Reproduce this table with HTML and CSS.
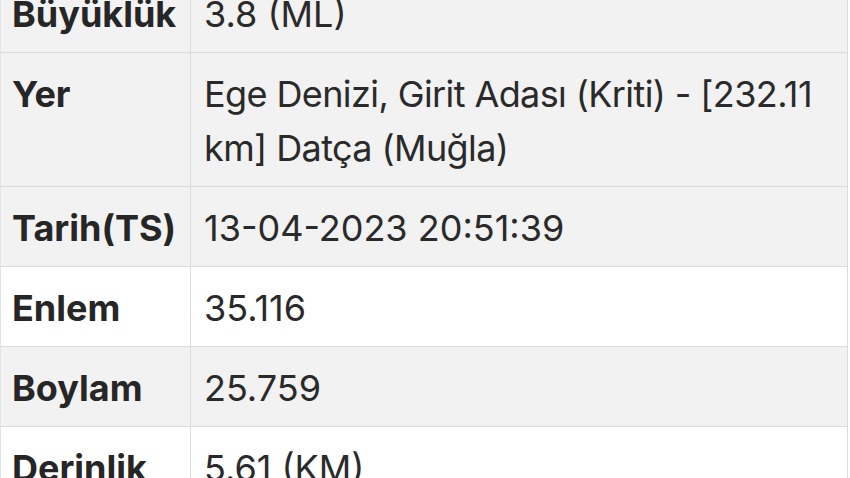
FILE: index.html
```html
<!DOCTYPE html>
<html lang="tr">
<head>
<meta charset="utf-8">
<link rel="stylesheet" href="styles.css">
</head>
<body>
<table class="info">
  <colgroup><col class="c-key"><col class="c-val"></colgroup>
  <tbody>
    <tr class="alt"><th>Büyüklük</th><td>3.8 (ML)</td></tr>
    <tr class="alt"><th>Yer</th><td class="place">Ege Denizi, Girit Adası (Kriti) - [232.11 km] Datça (Muğla)</td></tr>
    <tr class="alt"><th>Tarih(TS)</th><td>13-04-2023 20:51:39</td></tr>
    <tr><th>Enlem</th><td>35.116</td></tr>
    <tr class="alt"><th>Boylam</th><td>25.759</td></tr>
    <tr><th>Derinlik</th><td>5.61 (KM)</td></tr>
  </tbody>
</table>
</body>
</html>
```

FILE: styles.css
```css
html, body {
  margin: 0;
  padding: 0;
  background: #ffffff;
  overflow: hidden;
}
body {
  font-family: Inter, "Liberation Sans", sans-serif;
  color: #262626;
}
.info {
  border-collapse: collapse;
  table-layout: fixed;
  width: 848px;
  margin-top: -28px;
  font-size: 36px;
  line-height: 54px;
}
.c-key { width: 190px; }
.info th,
.info td {
  border: 1px solid #dcdcdc;
  padding: 14px 13px 11px 13px;
  text-align: left;
  vertical-align: top;
  background: #ffffff;
}
.info th {
  font-weight: 700;
  white-space: nowrap;
  padding-left: 11px;
  padding-right: 8px;
}
.info td {
  font-weight: 400;
  color: #2a2a2a;
}
.info td.place {
  letter-spacing: -0.6px;
}
.info tr.alt th,
.info tr.alt td {
  background: #f2f2f2;
}
.info tr th { border-left: 1px solid #e4e4e4; }
```
